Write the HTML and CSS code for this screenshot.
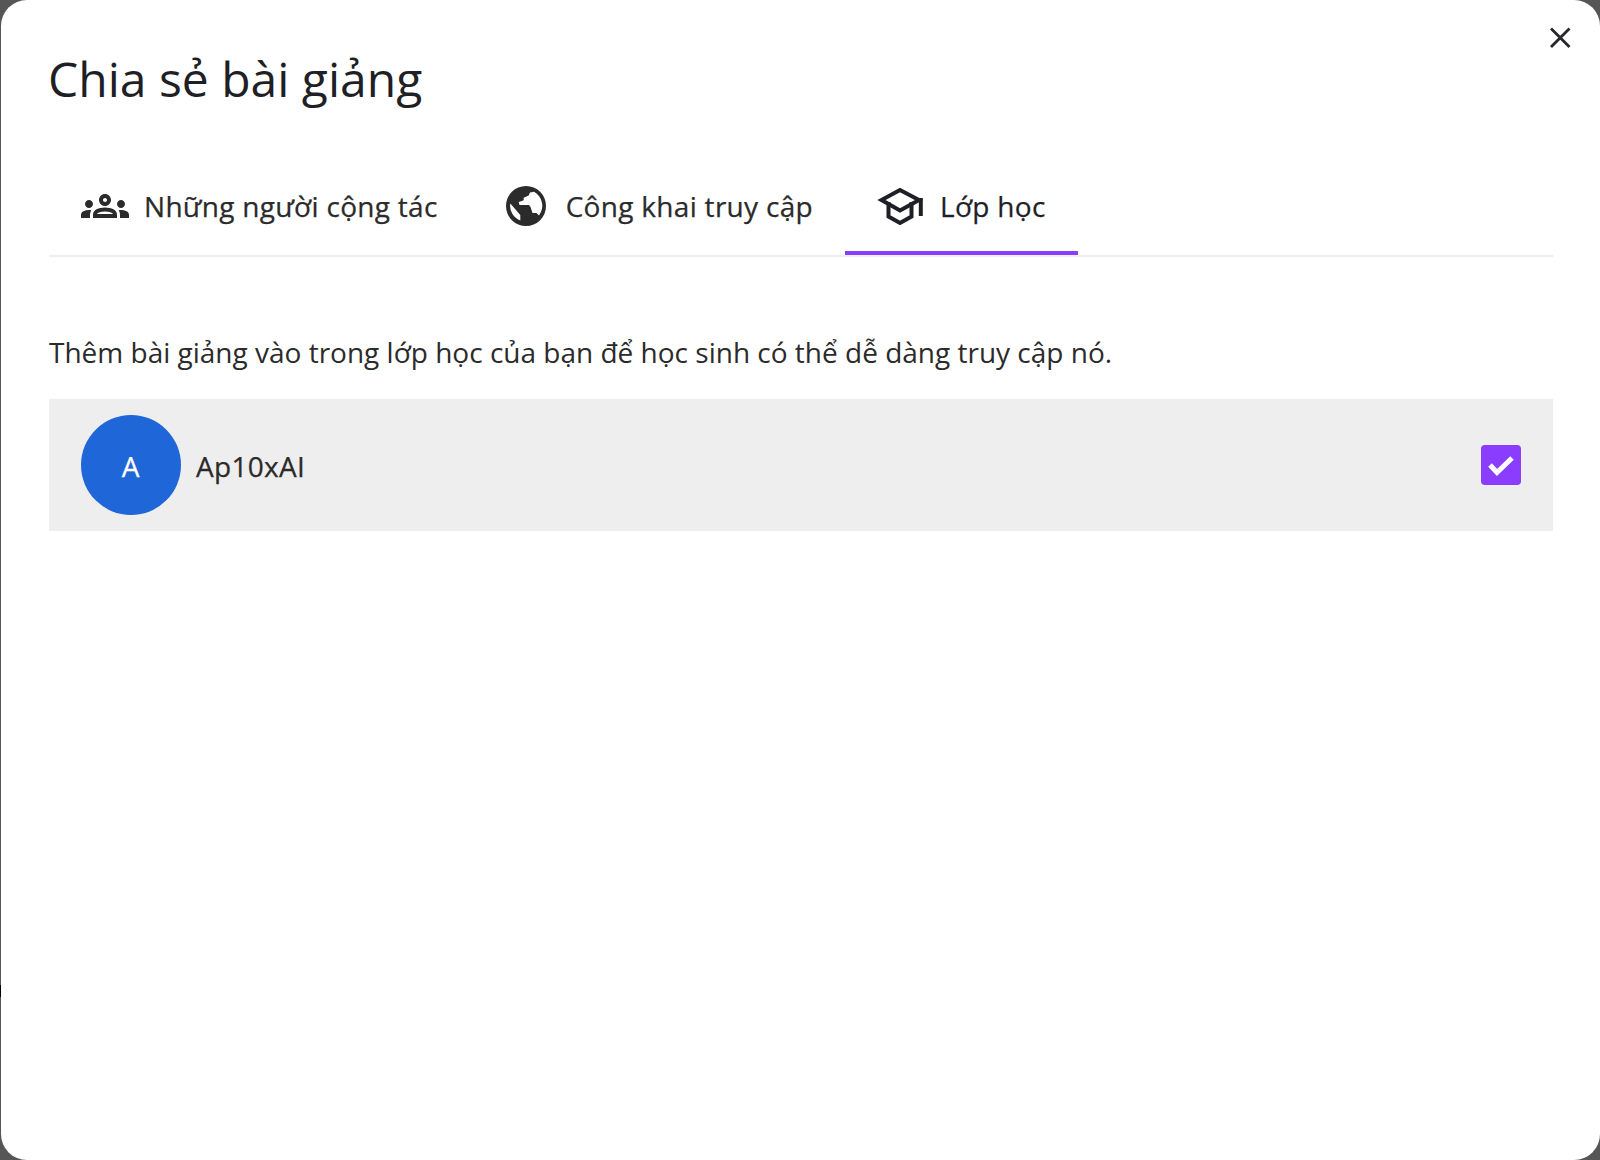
FILE: index.html
```html
<!DOCTYPE html>
<html lang="vi">
<head>
<meta charset="utf-8">
<title>Chia sẻ bài giảng</title>
<link rel="stylesheet" href="styles.css">
</head>
<body>
<div class="edge-mark"></div>
<main class="modal">
  <button class="close" aria-label="Đóng">
    <svg viewBox="0 0 24 24" width="24" height="24"><path d="M3 2.500 21.500 21M21.500 2.500 3 21" fill="none" stroke="#26262b" stroke-width="2.800"/></svg>
  </button>
  <h1 class="title">Chia sẻ bài giảng</h1>
  <nav class="tabs">
    <div class="tab">
      <svg class="tab-icon" viewBox="0 0 24 24"><path fill="#2b2b2b" d="M4 13c1.1 0 2-.9 2-2s-.9-2-2-2-2 .9-2 2 .9 2 2 2zm1.13 1.1c-.37-.06-.74-.1-1.13-.1-.99 0-1.93.21-2.78.58C.48 14.9 0 15.62 0 16.43V18h4.5v-1.61c0-.83.23-1.61.63-2.29zM20 13c1.1 0 2-.9 2-2s-.9-2-2-2-2 .9-2 2 .9 2 2 2zm4 3.43c0-.81-.48-1.53-1.22-1.85-.85-.37-1.79-.58-2.78-.58-.39 0-.76.04-1.13.1.4.68.63 1.46.63 2.29V18H24v-1.57zm-7.76-2.78c-1.17-.52-2.61-.9-4.24-.9-1.63 0-3.07.39-4.24.9C6.68 14.13 6 15.21 6 16.39V18h12v-1.61c0-1.18-.68-2.26-1.76-2.74zM8.07 16c.09-.23.13-.39.91-.69.97-.38 1.99-.56 3.02-.56s2.05.18 3.02.56c.77.3.81.46.91.69H8.07zM12 8c.55 0 1 .45 1 1s-.45 1-1 1-1-.45-1-1 .45-1 1-1m0-2c-1.66 0-3 1.34-3 3s1.34 3 3 3 3-1.34 3-3-1.34-3-3-3z"/></svg>
      <span>Những người cộng tác</span>
    </div>
    <div class="tab tab-public">
      <svg class="tab-icon" viewBox="0 0 48 48"><path fill="#2b2b2b" fill-rule="evenodd" d="M24 4a20 20 0 1 0 0 40 20 20 0 0 0 0-40ZM32 9.800A16 16 0 0 1 37 33.500L34.500 31H30.500L28.500 25 27 23H17.500L16.700 20 21.700 18.300V15.700L26.700 13.500 28 10.500ZM8.300 21.500 18.300 33V38.400A15.500 15.500 0 0 1 8.300 21.500Z"/></svg>
      <span>Công khai truy cập</span>
    </div>
    <div class="tab tab-active">
      <svg class="tab-icon" viewBox="0 0 48 48"><g fill="none" stroke="#1f1f26" stroke-width="4"><path d="M23 8 42 18 23 28.500 4.500 18Z"/><path d="M11.500 20V34.500L23 41 34.500 34.500V20"/><path d="M43.800 16V34"/></g></svg>
      <span>Lớp học</span>
    </div>
  </nav>
  <p class="intro">Thêm bài giảng vào trong lớp học của bạn để học sinh có thể dễ dàng truy cập nó.</p>
  <section class="class-row">
    <div class="avatar">A</div>
    <div class="class-name">Ap10xAI</div>
    <div class="checkbox">
      <svg viewBox="0 0 40 40" width="40" height="40"><path d="M9 20 16 27.500 31 13" fill="none" stroke="#fff" stroke-width="5"/></svg>
    </div>
  </section>
</main>
</body>
</html>
```

FILE: styles.css
```css
* { box-sizing: border-box; }
html, body { height: 100%; }
body {
  margin: 0;
  background: #565656;
  font-family: "Open Sans", sans-serif;
  color: #26262b;
  overflow: hidden;
}
.edge-mark {
  position: absolute;
  left: 0;
  top: 985px;
  width: 1px;
  height: 12px;
  background: #000;
}
.modal {
  position: relative;
  margin-left: 1px;
  height: 1160px;
  padding: 47px 47px 0 48px;
  background: #fff;
  border-radius: 26px;
}
.close {
  position: absolute;
  top: 26px;
  right: 28px;
  width: 24px;
  height: 24px;
  padding: 0;
  border: 0;
  background: none;
  display: flex;
}
.title {
  margin: 0 0 0 -1px;
  font-size: 48px;
  line-height: 64px;
  font-weight: 400;
  color: #1f1f26;
}
.tabs {
  display: flex;
  margin-top: 48px;
  border-bottom: 2px solid #eee;
  height: 98px;
}
.tab {
  display: flex;
  align-items: center;
  gap: 15px;
  height: 96px;
  padding: 0 32px 2px;
  font-size: 28px;
  letter-spacing: 0.3px;
  -webkit-text-stroke: 0.25px currentColor;
  color: #2b2b2b;
}
.tab-public { gap: 16px; }
.tab-active {
  color: #1f1f26;
  border-bottom: 4px solid #8b3dff;
  padding-top: 2px;
  padding-bottom: 0;
}
.tab-icon { width: 48px; height: 48px; flex: none; }
.intro {
  margin: 75px 0 0;
  font-size: 28px;
  line-height: 40px;
  color: #2b2b2b;
}
.class-row {
  display: flex;
  align-items: center;
  margin-top: 27px;
  height: 132px;
  padding: 0 32px;
  background: #eee;
}
.avatar {
  width: 100px;
  height: 100px;
  padding: 2px 1px 0 0;
  border-radius: 50%;
  background: #1f66d9;
  color: #fff;
  font-size: 28px;
  -webkit-text-stroke: 0.25px currentColor;
  display: flex;
  align-items: center;
  justify-content: center;
  flex: none;
}
.class-name {
  margin-left: 15px;
  padding-top: 2px;
  font-size: 28px;
  letter-spacing: 0.3px;
  -webkit-text-stroke: 0.25px currentColor;
  color: #2b2b2b;
  flex: 1;
}
.checkbox {
  width: 40px;
  height: 40px;
  border-radius: 4px;
  background: #8b3dff;
  display: flex;
}
```
